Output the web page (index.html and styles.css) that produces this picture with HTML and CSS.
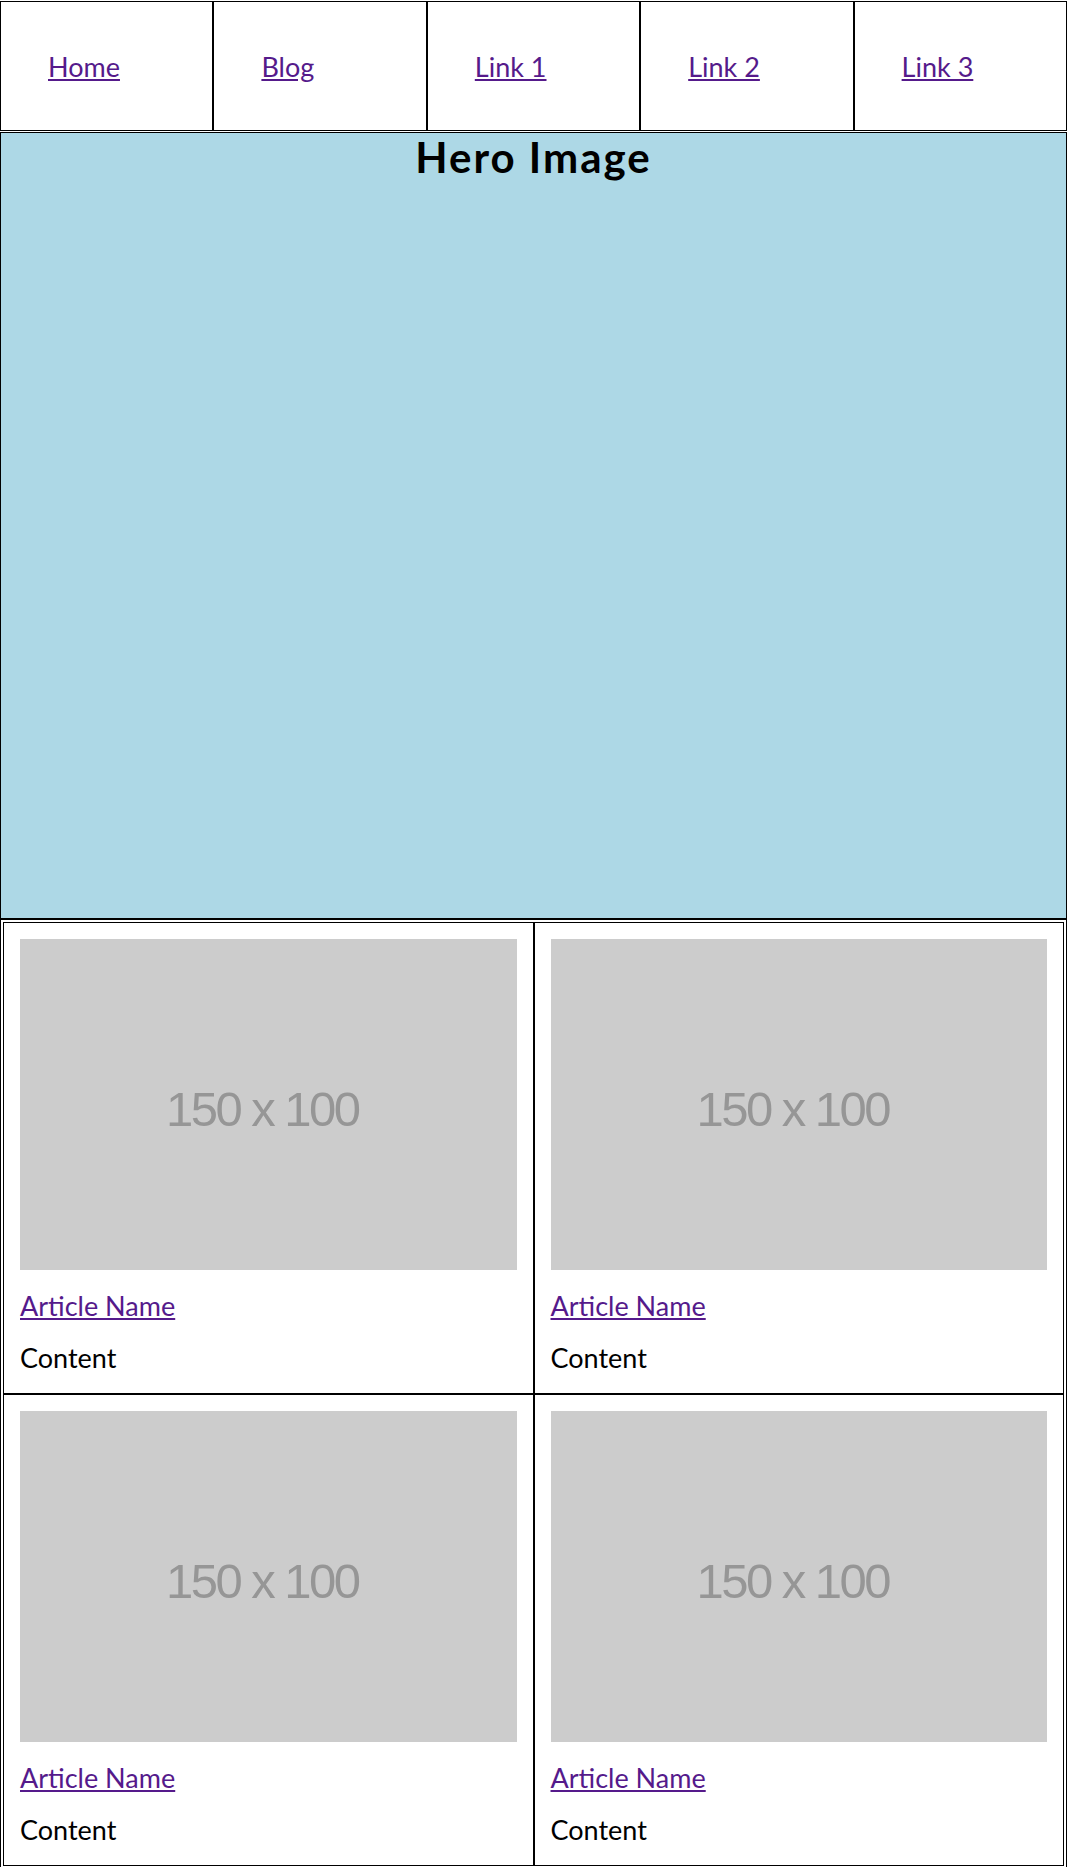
FILE: index.html
```html
<!DOCTYPE html>
<html lang="en">
<head>
	<meta charset="UTF-8">
	<title>Blog</title>
	<link rel="stylesheet" href="styles.css">
</head>
<body>
	<!-- 导航 -->
	<nav class="nav">
		<div class="nav-item"><a href="#">Home</a></div>
		<div class="nav-item"><a href="#">Blog</a></div>
		<div class="nav-item"><a href="#">Link 1</a></div>
		<div class="nav-item"><a href="#">Link 2</a></div>
		<div class="nav-item"><a href="#">Link 3</a></div>
	</nav>

	<!-- 大图 -->
	<header class="hero">
		<h1>Hero Image</h1>
	</header>

	<!-- 文章列表 -->
	<main class="articles">
		<article class="card">
			<div class="thumb"><span>150 x 100</span></div>
			<p class="card-title"><a href="#">Article Name</a></p>
			<p class="card-text">Content</p>
		</article>
		<article class="card">
			<div class="thumb"><span>150 x 100</span></div>
			<p class="card-title"><a href="#">Article Name</a></p>
			<p class="card-text">Content</p>
		</article>
		<article class="card">
			<div class="thumb"><span>150 x 100</span></div>
			<p class="card-title"><a href="#">Article Name</a></p>
			<p class="card-text">Content</p>
		</article>
		<article class="card">
			<div class="thumb"><span>150 x 100</span></div>
			<p class="card-title"><a href="#">Article Name</a></p>
			<p class="card-text">Content</p>
		</article>
	</main>
</body>
</html>
```

FILE: styles.css
```css
body{margin: 0;font-family: "Lato", "Open Sans", sans-serif;font-size: 27px;color: #000;}
a{color: #551a8b;}

.nav{display: grid;grid-template-columns: repeat(5, 1fr);margin: 1px 0;}
.nav-item{border: 1px solid #000;height: 128px;display: flex;align-items: center;padding-left: 47px;}

.hero{border: 1px solid #000;height: 785px;background: #add8e6;text-align: center;}
.hero h1{margin: 0;font-size: 42px;font-weight: 700;line-height: 48px;letter-spacing: 2px;}

.articles{border: 1px solid #000;padding: 2px;display: grid;grid-template-columns: 1fr 1fr;}
.card{border: 1px solid #000;padding: 16px 16px 20px;}
.thumb{aspect-ratio: 3 / 2;background: #ccc;display: flex;align-items: center;justify-content: center;}
.thumb span{font-family: "Liberation Sans", Arial, sans-serif;font-size: 49px;letter-spacing: -2.5px;color: #969696;filter: blur(0.6px);padding: 8px 12px 0 0;}
.card-title{margin: 20px 0 0;line-height: 31px;}
.card-text{margin: 21px 0 0;line-height: 31px;}
```
